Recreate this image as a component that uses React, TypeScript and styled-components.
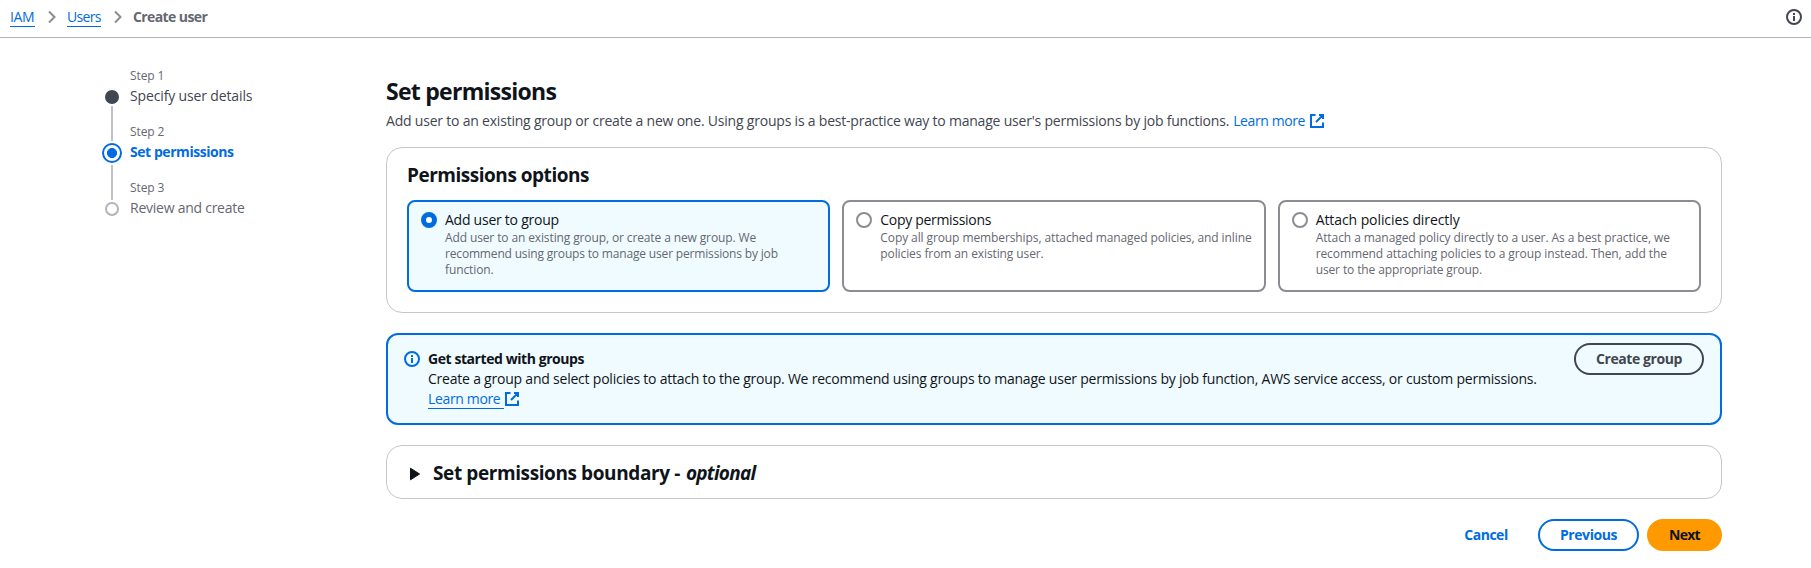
import React from 'react';
import styled, { createGlobalStyle, css } from 'styled-components';

const blue = '#006ce0';
const ink = '#0f141a';
const slate = '#424650';
const gray = '#656871';

const GlobalStyle = createGlobalStyle`
  *, *::before, *::after { box-sizing: border-box; }
  body {
    margin: 0;
    background: #fff;
    color: ${ink};
    font: 400 14px/20px "Open Sans", "Noto Sans", sans-serif;
  }
  h1, h2, p { margin: 0; }
  svg { display: block; flex: none; }
`;

/* Keeps one line of copy together, with its own tracking. */
const Line = styled.span<{ $track?: number }>`
  display: inline-block;
  white-space: nowrap;
  letter-spacing: ${p => p.$track ?? -0.22}px;
`;

const TopBar = styled.header`
  display: flex;
  justify-content: space-between;
  height: 38px;
  padding: 7px 9px 0 10px;
  border-bottom: 1px solid #b4b4b9;
`;

const Crumbs = styled.nav`
  display: flex;
  align-items: flex-start;
`;

const CrumbLink = styled.a<{ $width: number }>`
  width: ${p => p.$width}px;
  height: 20px;
  color: ${blue};
  border-bottom: 1px solid ${blue};
`;

const CrumbCurrent = styled.span`
  color: ${gray};
  font-weight: 700;
`;

const Chevron = styled.svg`
  width: 8px;
  height: 14px;
  margin: 3px 11px 0 13px;
`;

const HeaderInfo = styled.div`
  padding-top: 2px;
  color: ${slate};
`;

const Page = styled.div`
  display: grid;
  grid-template-columns: 284px 1336px;
  padding-left: 102px;
`;

const Steps = styled.ol`
  list-style: none;
  margin: 0;
  padding: 30px 0 0;
`;

const Step = styled.li`
  display: grid;
  grid-template-columns: 20px 1fr;
  grid-template-rows: 18px 20px 18px;
  column-gap: 8px;
`;

const StepNumber = styled.span`
  grid-column: 2;
  grid-row: 1;
  font-size: 12px;
  line-height: 16px;
  color: ${gray};
`;

const StepTitle = styled.span<{ $state: StepState }>`
  grid-column: 2;
  grid-row: 2;
  ${p => p.$state === 'done' && css`color: ${slate};`}
  ${p => p.$state === 'active' && css`color: ${blue}; font-weight: 700;`}
  ${p => p.$state === 'todo' && css`color: ${gray};`}
`;

const StepRail = styled.div<{ $state: StepState }>`
  grid-column: 1;
  grid-row: 1 / 4;
  display: flex;
  flex-direction: column;
  align-items: center;
  padding-top: ${p => (p.$state === 'active' ? 19 : 22)}px;
  margin-bottom: -20px;
`;

const Marker = styled.span<{ $state: StepState }>`
  flex: none;
  border-radius: 50%;
  width: 14px;
  height: 14px;
  ${p => p.$state === 'done' && css`background: ${slate};`}
  ${p => p.$state === 'todo' && css`border: 2px solid #b4b4bb;`}
  ${p => p.$state === 'active' && css`
    width: 20px;
    height: 20px;
    border: 2px solid ${blue};
    background: radial-gradient(circle, ${blue} 4.7px, #fff 5.3px);
  `}
`;

const Connector = styled.span`
  width: 2px;
  height: 35px;
  margin-top: 2px;
  background: #c0c2c9;
`;

const Main = styled.main`
  padding-top: 38px;
`;

const PageTitle = styled.h1`
  padding-top: 1px;
  font-size: 23px;
  line-height: 29px;
  font-weight: 700;
`;

const Intro = styled.p`
  display: flex;
  margin-top: 5px;
  color: ${slate};
`;

const IntroLink = styled.a`
  display: flex;
  align-items: center;
  gap: 4px;
  margin-left: 4px;
  color: ${blue};
`;

const Card = styled.section`
  margin-top: 16px;
  height: 166px;
  padding: 15px 20px 0;
  border: 1px solid #c6c6cd;
  border-radius: 16px;
`;

const CardTitle = styled.h2`
  font-size: 19px;
  line-height: 24px;
  font-weight: 700;
`;

const Tiles = styled.div`
  display: grid;
  grid-template-columns: repeat(3, 1fr);
  gap: 12px;
  margin-top: 13px;
`;

const Tile = styled.label<{ $selected?: boolean }>`
  display: flex;
  gap: 8px;
  height: 92px;
  padding: 8px 12px;
  border: 2px solid ${p => (p.$selected ? blue : '#8c8c94')};
  border-radius: 8px;
  background: ${p => (p.$selected ? '#f0fbff' : '#fff')};
`;

const Radio = styled.span<{ $selected?: boolean }>`
  flex: none;
  width: 16px;
  height: 16px;
  margin-top: 2px;
  border-radius: 50%;
  background: #fff;
  border: ${p => (p.$selected ? `5px solid ${blue}` : '2px solid #8c8c94')};
`;

const TileText = styled.span`
  display: flex;
  flex-direction: column;
`;

const TileHint = styled.span`
  display: flex;
  flex-direction: column;
  font-size: 12px;
  line-height: 16px;
  color: ${gray};
`;

const Alert = styled.section`
  display: flex;
  height: 92px;
  margin-top: 20px;
  padding: 8px 16px 0;
  border: 2px solid ${blue};
  border-radius: 12px;
  background: #f0fbff;
`;

const AlertIcon = styled.div`
  padding: 8px 8px 0 0;
  color: ${blue};
`;

const AlertBody = styled.div`
  flex: 1;
  padding-top: 6px;
`;

const AlertTitle = styled.div`
  font-weight: 700;
`;

const AlertLink = styled.a`
  display: flex;
  align-items: flex-start;
  color: ${blue};

  svg { margin-top: 2px; }
`;

const AlertLinkText = styled.span`
  width: 76px;
  height: 20px;
  border-bottom: 1px solid ${blue};
`;

const Boundary = styled.section`
  display: flex;
  align-items: flex-start;
  height: 54px;
  margin-top: 20px;
  padding: 15px 22px 0 23px;
  border: 1px solid #c6c6cd;
  border-radius: 16px;

  svg { margin-top: 6px; }
`;

const BoundaryTitle = styled(CardTitle)`
  display: flex;
  gap: 6px;
  margin-left: 13px;
`;

const Actions = styled.div`
  display: flex;
  justify-content: flex-end;
  gap: 8px;
  margin-top: 20px;
`;

const tones = {
  normal: css`color: ${slate}; border-color: ${slate};`,
  outline: css`color: ${blue}; border-color: ${blue}; background: #fff;`,
  link: css`color: ${blue};`,
  primary: css`color: ${ink}; border-color: #ff9900; background: #ff9900;`,
};

const Button = styled.button<{ $tone: keyof typeof tones; $width: number }>`
  width: ${p => p.$width}px;
  height: 32px;
  padding: 0;
  border: 2px solid transparent;
  border-radius: 20px;
  background: transparent;
  font: inherit;
  font-weight: 700;
  ${p => tones[p.$tone]}
`;

type StepState = 'done' | 'active' | 'todo';

const steps: { title: string; state: StepState; track: number }[] = [
  { title: 'Specify user details', state: 'done', track: -0.14 },
  { title: 'Set permissions', state: 'active', track: -0.44 },
  { title: 'Review and create', state: 'todo', track: -0.25 },
];

const options = [
  {
    title: 'Add user to group',
    track: -0.25,
    hint: [
      ['Add user to an existing group, or create a new group. We', -0.12],
      ['recommend using groups to manage user permissions by job', -0.17],
      ['function.', -0.1],
    ],
  },
  {
    title: 'Copy permissions',
    track: -0.31,
    hint: [
      ['Copy all group memberships, attached managed policies, and inline', -0.1],
      ['policies from an existing user.', -0.1],
    ],
  },
  {
    title: 'Attach policies directly',
    track: -0.08,
    hint: [
      ['Attach a managed policy directly to a user. As a best practice, we', -0.08],
      ['recommend attaching policies to a group instead. Then, add the', -0.09],
      ['user to the appropriate group.', -0.12],
    ],
  },
] as { title: string; track: number; hint: [string, number][] }[];

const Separator = () => (
  <Chevron viewBox="0 0 8 14" fill="none" stroke="#8c8c94" strokeWidth="2">
    <path d="M1 1.5l5.5 5.5L1 12.5" />
  </Chevron>
);

const InfoIcon = () => (
  <svg width="16" height="16" viewBox="0 0 16 16" fill="none" stroke="currentColor" strokeWidth="2">
    <circle cx="8" cy="8" r="7" />
    <path d="M8 7v5M8 4v2" />
  </svg>
);

const ExternalIcon = () => (
  <svg width="16" height="16" viewBox="0 0 16 16" fill="none" stroke="currentColor" strokeWidth="2">
    <path d="M10 2h4v4M7 9l7-7M14 9.5V14H2V2h4.5" />
  </svg>
);

export default function App() {
  return (
    <>
      <GlobalStyle />
      <TopBar>
        <Crumbs>
          <CrumbLink $width={25}><Line $track={-0.35}>IAM</Line></CrumbLink>
          <Separator />
          <CrumbLink $width={34}><Line $track={-0.68}>Users</Line></CrumbLink>
          <Separator />
          <CrumbCurrent><Line $track={-0.6}>Create user</Line></CrumbCurrent>
        </Crumbs>
        <HeaderInfo><InfoIcon /></HeaderInfo>
      </TopBar>

      <Page>
        <Steps>
          {steps.map((step, i) => (
            <Step key={step.title}>
              <StepRail $state={step.state}>
                <Marker $state={step.state} />
                {i < steps.length - 1 && <Connector />}
              </StepRail>
              <StepNumber><Line $track={-0.1}>Step {i + 1}</Line></StepNumber>
              <StepTitle $state={step.state}><Line $track={step.track}>{step.title}</Line></StepTitle>
            </Step>
          ))}
        </Steps>

        <Main>
          <PageTitle><Line $track={-0.73}>Set permissions</Line></PageTitle>
          <Intro>
            <Line $track={-0.206}>
              Add user to an existing group or create a new one. Using groups is a best-practice way to manage user's permissions by job functions.
            </Line>
            <IntroLink><Line $track={-0.4}>Learn more</Line><ExternalIcon /></IntroLink>
          </Intro>

          <Card>
            <CardTitle><Line $track={-0.48}>Permissions options</Line></CardTitle>
            <Tiles>
              {options.map((option, i) => (
                <Tile key={option.title} $selected={i === 0}>
                  <Radio $selected={i === 0} />
                  <TileText>
                    <Line $track={option.track}>{option.title}</Line>
                    <TileHint>
                      {option.hint.map(([text, track]) => <Line key={text} $track={track}>{text}</Line>)}
                    </TileHint>
                  </TileText>
                </Tile>
              ))}
            </Tiles>
          </Card>

          <Alert>
            <AlertIcon><InfoIcon /></AlertIcon>
            <AlertBody>
              <AlertTitle><Line $track={-0.43}>Get started with groups</Line></AlertTitle>
              <Line $track={-0.218}>
                Create a group and select policies to attach to the group. We recommend using groups to manage user permissions by job function, AWS service access, or custom permissions.
              </Line>
              <AlertLink>
                <AlertLinkText><Line $track={-0.35}>Learn more</Line></AlertLinkText>
                <ExternalIcon />
              </AlertLink>
            </AlertBody>
            <Button $tone="normal" $width={130}><Line $track={-0.42}>Create group</Line></Button>
          </Alert>

          <Boundary>
            <svg width="10" height="14" viewBox="0 0 10 14" fill={ink}>
              <path d="M.5 1.2L9.6 7 .5 12.8z" stroke={ink} strokeWidth="1" strokeLinejoin="round" />
            </svg>
            <BoundaryTitle>
              <Line $track={-0.4}>Set permissions boundary -</Line>
              <Line as="em" $track={-0.72}>optional</Line>
            </BoundaryTitle>
          </Boundary>

          <Actions>
            <Button $tone="link" $width={88}><Line $track={-0.5}>Cancel</Line></Button>
            <Button $tone="outline" $width={101}><Line $track={-0.42}>Previous</Line></Button>
            <Button $tone="primary" $width={75}><Line $track={-0.75}>Next</Line></Button>
          </Actions>
        </Main>
      </Page>
    </>
  );
}
